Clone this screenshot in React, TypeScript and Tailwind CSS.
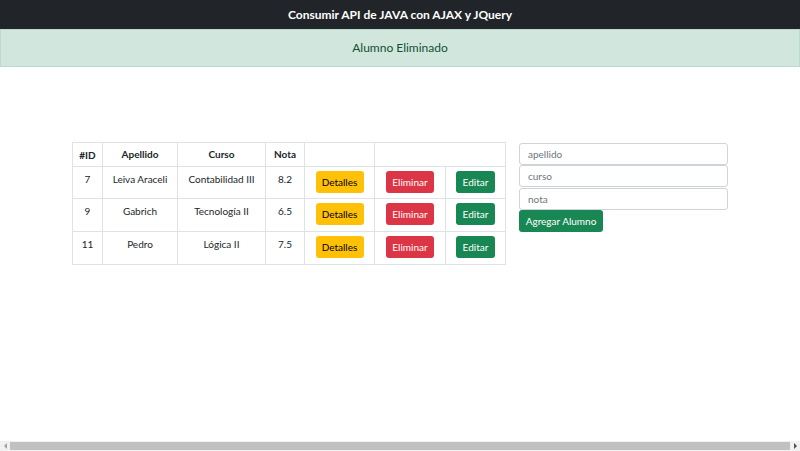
import React from "react";

const rows = [
  { id: 7, ap: "Leiva Araceli", curso: "Contabilidad III", nota: "8.2" },
  { id: 9, ap: "Gabrich", curso: "Tecnología II", nota: "6.5" },
  { id: 11, ap: "Pedro", curso: "Lógica II", nota: "7.5" },
];

const td = "border border-[#dee2e6] text-center align-top pt-[4px] pb-[5px] leading-[16px]";

export default function App() {
  return (
    <div
      className="h-[451px] w-[800px] flex flex-col bg-white text-[#212529] overflow-hidden"
      style={{ fontFamily: 'Lato, "Noto Sans", sans-serif' }}
    >
      <div className="h-[29px] bg-[#212529] flex items-center justify-center">
        <span className="text-white font-bold text-[12px] leading-none">
          Consumir API de JAVA con AJAX y JQuery
        </span>
      </div>
      <div className="h-[38px] bg-[#d1e7dd] border border-[#badbcc] flex items-center justify-center">
        <span className="text-[#0f5132] text-[12px] leading-none">Alumno Eliminado</span>
      </div>

      <div className="mt-[75px] mx-auto w-[656px] flex gap-[14px] items-start">
        <table className="w-[433px] border-collapse table-fixed text-[10px]">
          <colgroup>
            <col className="w-[30px]" />
            <col className="w-[75px]" />
            <col className="w-[88px]" />
            <col className="w-[39px]" />
            <col className="w-[70px]" />
            <col className="w-[71px]" />
            <col className="w-[60px]" />
          </colgroup>
          <thead>
            <tr className="h-[24px]">
              <th className="border border-[#dee2e6] font-bold text-center align-middle leading-[16px]">#ID</th>
              <th className="border border-[#dee2e6] font-bold text-center align-middle">Apellido</th>
              <th className="border border-[#dee2e6] font-bold text-center align-middle">Curso</th>
              <th className="border border-[#dee2e6] font-bold text-center align-middle">Nota</th>
              <th className="border border-[#dee2e6]"></th>
              <th className="border border-[#dee2e6]" colSpan={2}></th>
            </tr>
          </thead>
          <tbody>
            {rows.map((r, i) => (
              <tr key={r.id} className={i === 0 ? "h-[32px]" : "h-[33px]"}>
                <td className={td}>{r.id}</td>
                <td className={td}>{r.ap}</td>
                <td className={td}>{r.curso}</td>
                <td className={td}>{r.nota}</td>
                <td className={td}>
                  <button className="h-[22px] w-[48px] rounded-[3px] bg-[#ffc107] text-black text-[10px] leading-none">
                    Detalles
                  </button>
                </td>
                <td className={td}>
                  <button className="h-[22px] w-[48px] rounded-[3px] bg-[#dc3545] text-white text-[10px] leading-none">
                    Eliminar
                  </button>
                </td>
                <td className={td}>
                  <button className="h-[22px] w-[39px] rounded-[3px] bg-[#198754] text-white text-[10px] leading-none">
                    Editar
                  </button>
                </td>
              </tr>
            ))}
          </tbody>
        </table>

        <div className="w-[209px] flex flex-col mt-[1px] -ml-[1px]">
          <input
            placeholder="apellido"
            className="h-[22px] w-full border border-[#ced4da] rounded-[3px] px-[8px] text-[10px] placeholder:text-[#6c757d] outline-none"
          />
          <input
            placeholder="curso"
            className="h-[22px] w-full border border-[#ced4da] rounded-[3px] px-[8px] text-[10px] placeholder:text-[#6c757d] outline-none"
          />
          <input
            placeholder="nota"
            className="mt-[1px] h-[22px] w-full border border-[#ced4da] rounded-[3px] px-[8px] text-[10px] placeholder:text-[#6c757d] outline-none"
          />
          <button className="h-[22px] w-[84px] rounded-[3px] bg-[#198754] text-white text-[10px] leading-none">
            Agregar Alumno
          </button>
        </div>
      </div>

      <div className="mt-auto h-[10px] bg-[#f1f1f1] flex items-center">
        <div className="w-[10px] flex items-center justify-center">
          <div className="w-0 h-0 border-y-[3px] border-y-transparent border-r-[3px] border-r-[#a3a3a3]" />
        </div>
        <div className="flex-1 h-[8px] bg-[#c1c1c1]" />
        <div className="w-[10px] flex items-center justify-center">
          <div className="w-0 h-0 border-y-[3px] border-y-transparent border-l-[3px] border-l-[#505050]" />
        </div>
      </div>
    </div>
  );
}
